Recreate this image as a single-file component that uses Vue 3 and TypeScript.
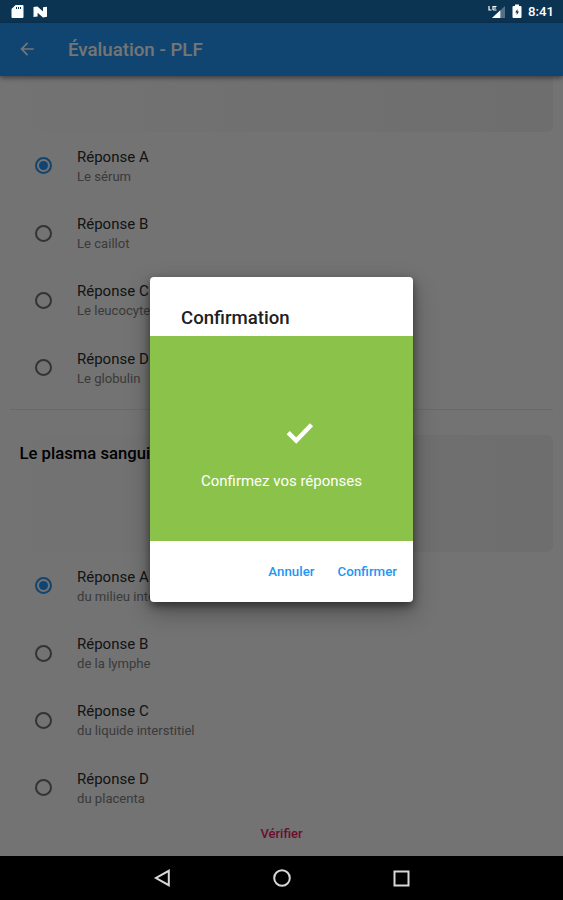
<script setup lang="ts">
interface Answer {
  label: string
  text: string
  selected?: boolean
}

const firstAnswers: Answer[] = [
  { label: 'Réponse A', text: 'Le sérum', selected: true },
  { label: 'Réponse B', text: 'Le caillot' },
  { label: 'Réponse C', text: 'Le leucocyte' },
  { label: 'Réponse D', text: 'Le globulin' },
]

const secondAnswers: Answer[] = [
  { label: 'Réponse A', text: 'du milieu intérieur', selected: true },
  { label: 'Réponse B', text: 'de la lymphe' },
  { label: 'Réponse C', text: 'du liquide interstitiel' },
  { label: 'Réponse D', text: 'du placenta' },
]
</script>

<template>
  <div class="screen">
    <div class="page">
      <div class="status-bg"></div>
      <header class="app-bar">
        <svg class="back" viewBox="0 0 24 24"><path d="M20 11H7.83l5.59-5.59L12 4l-8 8 8 8 1.41-1.41L7.83 13H20v-2z" /></svg>
        <h1>Évaluation - PLF</h1>
      </header>
      <main class="content">
        <div class="question first"></div>
        <ul class="answers">
          <li v-for="a in firstAnswers" :key="a.label" class="answer">
            <span class="radio" :class="{ selected: a.selected }"></span>
            <span class="labels"><span class="label">{{ a.label }}</span><span class="text">{{ a.text }}</span></span>
          </li>
        </ul>
        <div class="divider"></div>
        <div class="question second">Le plasma sanguin</div>
        <ul class="answers">
          <li v-for="a in secondAnswers" :key="a.label" class="answer">
            <span class="radio" :class="{ selected: a.selected }"></span>
            <span class="labels"><span class="label">{{ a.label }}</span><span class="text">{{ a.text }}</span></span>
          </li>
        </ul>
        <button class="verify">Vérifier</button>
      </main>
    </div>

    <nav class="nav">
      <svg viewBox="0 0 20 20"><path d="M16.8 2.8v14.4L4 10z" /></svg>
      <svg viewBox="0 0 20 20"><circle cx="10" cy="10" r="7.8" /></svg>
      <svg viewBox="0 0 20 20"><rect x="3.5" y="3.5" width="14" height="14" /></svg>
    </nav>

    <div class="scrim">
      <section class="dialog">
        <h2>Confirmation</h2>
        <div class="dialog-body">
          <svg class="check" viewBox="0 0 28 22"><path d="M2.2 10.7 10.2 18.5 25.5 2.8" /></svg>
          <p>Confirmez vos réponses</p>
        </div>
        <div class="actions">
          <button class="cancel">Annuler</button>
          <button>Confirmer</button>
        </div>
      </section>
    </div>

    <div class="status">
      <svg class="sd" viewBox="0 0 13 15"><path fill-rule="evenodd" d="M4.6 1H11.5Q12.5 1 12.5 2V13Q12.5 14 11.5 14H1.5Q.5 14 .5 13V5zM5 3v2h1V3zM7 3v2h1V3zM9 3v2h1V3z" /></svg>
      <svg class="nougat" viewBox="0 0 15 12"><path d="M.5 1 4.5 .5 10 5.5V1.2L14 .7V10.8L10 11.5 4.6 6.7V10.6L.5 11z" /></svg>
      <span class="spacer"></span>
      <svg class="signal" viewBox="0 0 18 14">
        <path class="faint" d="M17 1V13H4z" /><path d="M12.3 5.3V13H4z" />
        <path class="lte" d="M1 1V5H3.5M5 1.5H8.5M5 5H8.5M5 1V5M6 3H8" />
      </svg>
      <svg class="battery" viewBox="0 0 10 15"><path fill-rule="evenodd" d="M3 .5H7V2H8.5Q9.5 2 9.5 3V13Q9.5 14 8.5 14H1.5Q.5 14 .5 13V3Q.5 2 1.5 2H3zM5.5 5 3.2 8.6H4.7V11L7 7.6H5.5z" /></svg>
      <span class="time">8:41</span>
    </div>
  </div>
</template>

<style>
body {
  margin: 0;
}
</style>

<style scoped>
* {
  box-sizing: border-box;
}
.screen {
  position: relative;
  width: 563px;
  height: 900px;
  overflow: hidden;
  background: #fafafa;
  font-family: Roboto, sans-serif;
}
.page {
  height: 856px;
  overflow: hidden;
}
.status-bg {
  height: 23px;
  background: #1970b3;
}
.app-bar {
  position: relative;
  display: flex;
  align-items: center;
  height: 53px;
  padding-left: 17px;
  background: #2196f3;
  box-shadow: 0 2px 5px rgba(0, 0, 0, 0.45);
}
.back {
  width: 20px;
  height: 20px;
  margin-top: -1px;
  fill: #fff;
}
h1 {
  margin: 0 0 0 31px;
  font-size: 18.7px;
  font-weight: 500;
  line-height: 24px;
  color: #fff;
}
.question {
  margin: 0 10px;
  border-radius: 6px;
  background: linear-gradient(90deg, #fafafa, #efefef);
}
.first {
  height: 56px;
  border-radius: 0 0 6px 6px;
}
.second {
  height: 117px;
  margin-top: 25px;
  padding: 8px 9.5px;
  font-size: 16.7px;
  font-weight: 500;
  line-height: 22px;
  color: #000;
}
.answers {
  margin: 0;
  padding: 0;
  list-style: none;
}
.answer {
  display: flex;
  align-items: center;
  height: 67.4px;
  padding-left: 35px;
}
.radio {
  display: flex;
  width: 17px;
  height: 17px;
  border: 2px solid #6f6f6f;
  border-radius: 50%;
}
.selected {
  border-color: #2196f3;
}
.selected::before {
  width: 9px;
  height: 9px;
  margin: 2px;
  border-radius: 50%;
  background: #2196f3;
  content: '';
}
.labels {
  display: flex;
  flex-direction: column;
  margin-left: 25px;
  padding-top: 2px;
}
.label {
  font-size: 15px;
  line-height: 19px;
  color: #2c2c2c;
}
.text {
  font-size: 13.1px;
  line-height: 19px;
  color: #808080;
}
.divider {
  height: 1px;
  margin: 7px 10px 0;
  background: #e6e6e6;
}
.divider + .question + .answers {
  padding-top: 0.4px;
}
button {
  padding: 0;
  border: 0;
  background: none;
  font-family: inherit;
  font-weight: 500;
}
.verify {
  display: block;
  margin: 4.6px auto 0;
  font-size: 13px;
  line-height: 16px;
  color: #e91e63;
}
.nav {
  display: flex;
  justify-content: center;
  align-items: center;
  gap: 99.5px;
  height: 44px;
  background: #000;
}
.nav svg {
  width: 20px;
  height: 20px;
  fill: none;
  stroke: #d8d8d8;
  stroke-width: 2;
}
.scrim {
  position: absolute;
  inset: 0 0 44px;
  display: flex;
  justify-content: center;
  align-items: flex-start;
  padding-top: 277px;
  background: rgba(0, 0, 0, 0.54);
}
.dialog {
  width: 263px;
  height: 325px;
  overflow: hidden;
  border-radius: 4px;
  background: #fff;
  box-shadow: 0 10px 24px rgba(0, 0, 0, 0.3), 0 4px 9px rgba(0, 0, 0, 0.45);
}
h2 {
  height: 59px;
  margin: 0;
  padding: 29px 0 0 31px;
  font-size: 18.6px;
  font-weight: 500;
  line-height: 24px;
  color: #202020;
}
.dialog-body {
  display: flex;
  flex-direction: column;
  align-items: center;
  height: 205px;
  padding-top: 86px;
  background: #8bc34a;
}
.check {
  width: 28px;
  height: 22px;
  margin-left: 36px;
  fill: none;
  stroke: #fff;
  stroke-width: 4.5;
}
.dialog-body p {
  margin: 26px 0 0;
  font-size: 15px;
  line-height: 22px;
  color: #fff;
}
.actions {
  display: flex;
  justify-content: flex-end;
  gap: 23px;
  padding: 23px 16px 0 0;
}
.actions button {
  font-size: 13.3px;
  line-height: 16px;
  color: #2196f3;
}
.status {
  position: absolute;
  inset: 0 0 auto;
  display: flex;
  align-items: center;
  height: 23px;
  padding: 0 9px 0 11px;
  color: #fff;
}
.status svg {
  fill: #fff;
}
.sd {
  width: 13px;
  height: 15px;
}
.nougat {
  width: 15px;
  height: 12px;
  margin-left: 9px;
}
.spacer {
  flex: 1;
}
.signal {
  width: 18px;
  height: 14px;
}
.signal .faint {
  fill: rgba(255, 255, 255, 0.3);
}
.signal .lte {
  fill: none;
  stroke: #fff;
  stroke-width: 1.2;
}
.battery {
  width: 10px;
  height: 15px;
  margin-left: 6px;
}
.time {
  margin-left: 6px;
  font-size: 13.2px;
  font-weight: 500;
}
</style>
